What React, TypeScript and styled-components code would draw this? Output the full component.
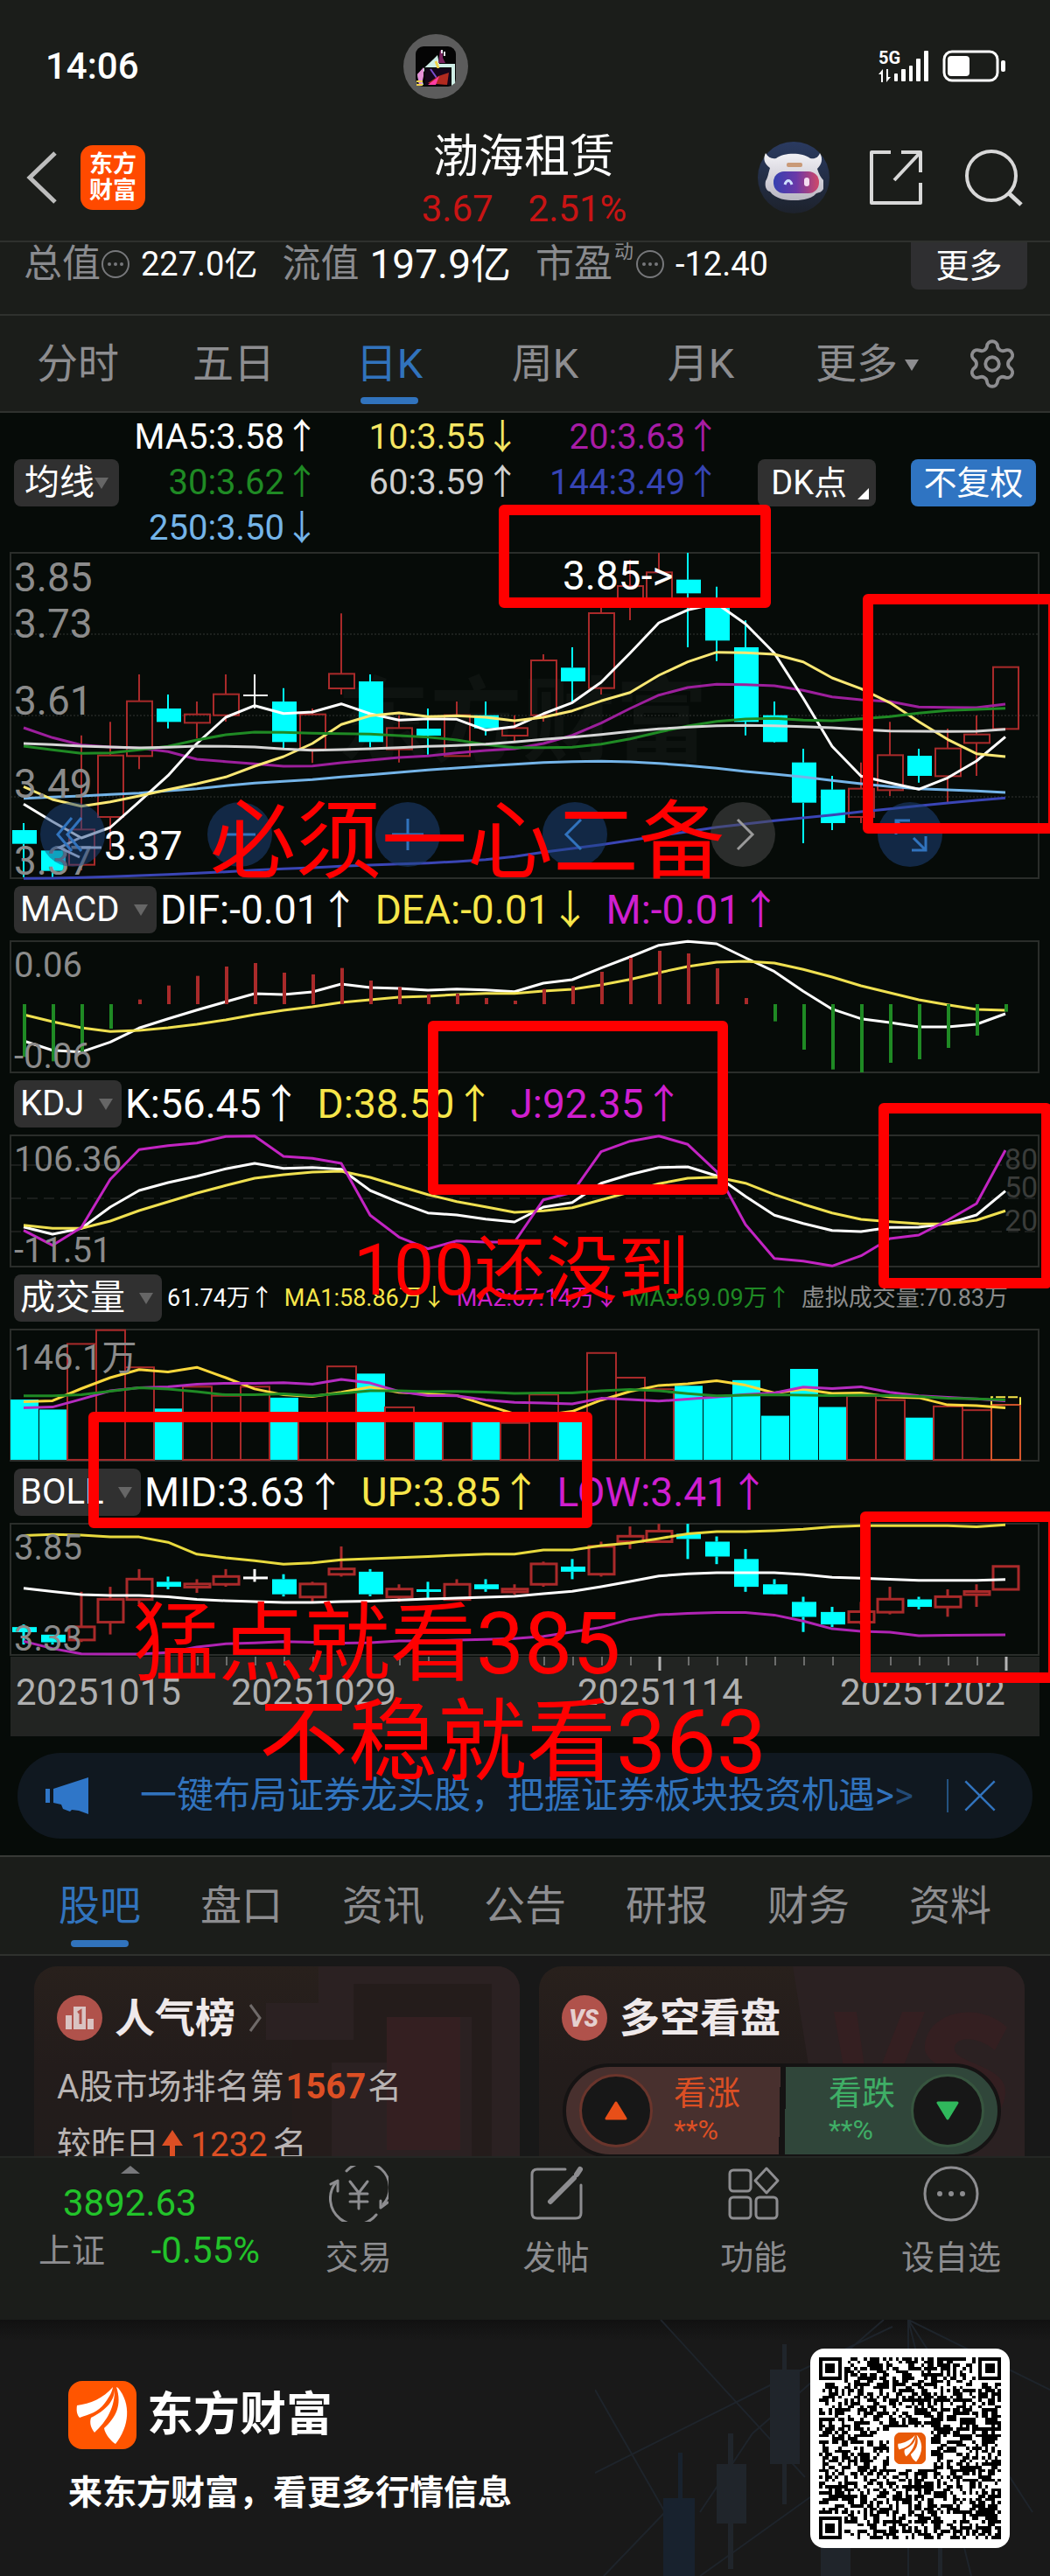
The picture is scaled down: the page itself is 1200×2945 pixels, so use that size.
import React from "react";
import styled, { createGlobalStyle } from "styled-components";
import { Settings } from "lucide-react";

const GlobalStyle = createGlobalStyle`
  *, *::before, *::after { box-sizing: border-box; }
  body { margin: 0; background: #1b1d1a; }
  button, select { font: inherit; color: inherit; border: 0; margin: 0; padding: 0; background: none; }
  svg { display: block; }
`;

const BLUE = "#3173bd";
const CYAN = "#00ffff";
const UP = "#a92a2a";
const WHITE = "#ffffff";
const YELLOW = "#f7e64a";
const MAGENTA = "#cf1fcf";
const GREEN = "#1f8a24";
const FRAME = "#2a2d2a";
const LABEL = "#8b8b8b";

const Page = styled.div`
  position: relative;
  overflow: hidden;
  background: #1b1d1a;
  color: #fff;
  font-family: Roboto, "Noto Sans CJK SC", sans-serif;
  font-size: 38px;
  line-height: 52px;
`;

/* ---------- status bar ---------- */
const StatusBar = styled.div`
  display: grid;
  grid-template-columns: 1fr auto 1fr;
  align-items: center;
  height: 130px;
  padding: 22px 50px 0 52px;
`;
const Clock = styled.time`
  font-size: 42px;
  font-weight: 500;
`;
const Island = styled.div`
  display: grid;
  place-items: center;
  width: 74px;
  height: 74px;
  margin-right: 206px;
  border-radius: 50%;
  background: #5c5c5c;
`;
const StatusIcons = styled.div`
  display: flex;
  justify-content: flex-end;
`;

/* ---------- header ---------- */
const Header = styled.header`
  display: grid;
  grid-template-columns: 1fr auto 1fr;
  align-items: center;
  height: 145px;
  padding: 0 30px 0 28px;
`;
const Side = styled.div<{ $end?: boolean }>`
  display: flex;
  align-items: center;
  gap: ${(p) => (p.$end ? 44 : 24)}px;
  justify-content: ${(p) => (p.$end ? "flex-end" : "flex-start")};
`;
const IconButton = styled.button`
  display: grid;
  place-items: center;
  cursor: pointer;
`;
const BrandTile = styled.span`
  display: grid;
  place-content: center;
  width: 74px;
  height: 74px;
  border-radius: 14px;
  background: #ff4a00;
  font-size: 27px;
  font-weight: 700;
  line-height: 30px;
`;
const Heading = styled.div`
  padding-top: 12px;
  text-align: center;
`;
const StockName = styled.h1`
  margin: 0;
  font-size: 52px;
  font-weight: 400;
  line-height: 60px;
`;
const Quote = styled.div`
  display: flex;
  justify-content: center;
  gap: 40px;
  color: #c81414;
  font-size: 42px;
  line-height: 58px;
`;

/* ---------- metrics ---------- */
const Metrics = styled.div`
  display: flex;
  align-items: center;
  height: 84px;
  padding: 0 26px 32px 27px;
  overflow: hidden;
  border-top: 2px solid #2f312e;
`;
const MetricName = styled.span`
  color: #8a8b8f;
  font-size: 44px;
`;
const MetricValue = styled.span<{ $big?: boolean }>`
  margin: 0 28px 0 12px;
  font-size: ${(p) => (p.$big ? 46 : 38)}px;
`;
const Sup = styled.sup`
  align-self: flex-start;
  margin: 0 2px;
  color: #8a8b8f;
  font-size: 22px;
  line-height: 22px;
`;
const MoreButton = styled.button`
  align-self: flex-start;
  flex: none;
  width: 133px;
  height: 54px;
  margin-left: auto;
  border-radius: 0 0 8px 8px;
  background: #2f2f31;
  line-height: 48px;
`;

/* ---------- tabs ---------- */
const PeriodTabs = styled.nav`
  display: grid;
  grid-template-columns: repeat(6, 1fr) 132px;
  height: 113px;
  border-top: 2px solid #2f312e;
  border-bottom: 2px solid #2f312e;
`;
const SectionTabs = styled.nav`
  display: grid;
  grid-template-columns: repeat(7, 1fr);
  height: 115px;
  padding: 0 33px;
  border-top: 2px solid #373936;
  border-bottom: 2px solid #2f312e;
`;
const Tab = styled.button<{ $on?: boolean }>`
  position: relative;
  color: ${(p) => (p.$on ? BLUE : "#8d8d90")};
  font-size: 47px;
  line-height: 109px;
  &::after {
    content: "";
    display: ${(p) => (p.$on ? "block" : "none")};
    position: absolute;
    left: calc(50% - 33px);
    bottom: 8px;
    width: 66px;
    height: 8px;
    border-radius: 4px;
    background: ${BLUE};
  }
`;
const Caret = styled.span<{ $color?: string }>`
  flex: none;
  border: 8px solid transparent;
  border-top: 13px solid ${(p) => p.$color || "#666"};
  border-bottom: 0;
`;
const TabCaret = styled(Caret)`
  position: absolute;
  top: 50px;
  right: 18px;
`;
const GearButton = styled(IconButton)`
  color: #8d8d90;
`;

/* ---------- indicator legends ---------- */
const ChartArea = styled.main`
  background: #060b08;
  padding-bottom: 19px;
`;
const MaLegend = styled.div`
  display: flex;
  align-items: center;
  height: 156px;
  padding: 4px 16px 0;
`;
const MaGrid = styled.div`
  display: grid;
  flex: 1;
  grid-template-columns: repeat(3, 1fr);
  margin-right: 43px;
  font-size: 40px;
  text-align: right;
`;
const Tone = styled.span<{ $color: string }>`
  color: ${(p) => p.$color};
  white-space: nowrap;
`;
const Picker = styled.label<{ $tight?: boolean }>`
  display: flex;
  flex: none;
  align-items: center;
  gap: ${(p) => (p.$tight ? 0 : 16)}px;
  height: 54px;
  padding: 0 ${(p) => (p.$tight ? 12 : 10)}px 0 ${(p) => (p.$tight ? 12 : 7)}px;
  border-radius: 8px;
  background: #303030;
  select {
    appearance: none;
    font-size: 40px;
    line-height: 54px;
    height: 54px;
  }
`;
const DkButton = styled.button`
  display: flex;
  align-items: flex-end;
  gap: 12px;
  height: 54px;
  padding: 0 8px 0 15px;
  border-radius: 8px;
  background: #303030;
  line-height: 54px;
  &::after {
    content: "";
    margin-bottom: 8px;
    border-left: 13px solid transparent;
    border-bottom: 13px solid #fff;
  }
`;
const AdjustButton = styled.button`
  width: 143px;
  height: 54px;
  margin-left: 40px;
  border-radius: 8px;
  background: #2f74c2;
  line-height: 54px;
`;
const IndicatorRow = styled.div<{ $small?: boolean }>`
  display: flex;
  align-items: center;
  gap: ${(p) => (p.$small ? 12 : 18)}px;
  height: 68px;
  padding-left: 16px;
  font-size: ${(p) => (p.$small ? 27 : 46)}px;
  & > label { margin-right: ${(p) => (p.$small ? -6 : -14)}px; }
`;

/* ---------- charts ---------- */
const Plot = styled.svg`
  width: 100%;
  height: auto;
  overflow: visible;
`;
const MainPlot = styled.div`
  position: relative;
`;
const Controls = styled.div`
  position: absolute;
  left: 46px;
  right: 123px;
  bottom: 15px;
  display: flex;
  justify-content: space-between;
`;
const RoundButton = styled.button<{ $muted?: boolean }>`
  display: grid;
  place-items: center;
  width: 74px;
  height: 74px;
  border-radius: 50%;
  background: ${(p) => (p.$muted ? "rgba(80, 80, 80, 0.5)" : "rgba(30, 70, 130, 0.5)")};
`;

/* ---------- banner ---------- */
const Banner = styled.aside`
  display: flex;
  align-items: center;
  height: 98px;
  margin: 19px 20px 0;
  padding: 0 40px 0 32px;
  border-radius: 49px;
  background: #101820;
  color: ${BLUE};
  font-size: 42px;
`;
const BannerLink = styled.a`
  flex: 1;
  margin-left: 58px;
  color: inherit;
  text-decoration: none;
  white-space: nowrap;
`;
const Faded = styled.span`
  opacity: 0.55;
`;
const Rule = styled.span`
  width: 2px;
  height: 38px;
  margin-right: 16px;
  background: #24517f;
`;

/* ---------- cards ---------- */
const Cards = styled.section`
  display: grid;
  grid-template-columns: 1fr 1fr;
  gap: 22px;
  height: 229px;
  padding: 12px 29px 0 39px;
  overflow: hidden;
  background: #181818;
`;
const Card = styled.article`
  position: relative;
  height: 280px;
  padding: 32px 26px;
  overflow: hidden;
  border-radius: 26px;
  background: linear-gradient(#28201c, #231c1b 40%, #201c1b);
`;
const CardArt = styled.svg`
  position: absolute;
  top: 0;
  right: 0;
`;
const CardTitle = styled.h2`
  position: relative;
  display: flex;
  align-items: center;
  gap: 14px;
  margin: 0;
  color: #efe9ea;
  font-size: 46px;
  font-weight: 700;
  line-height: 54px;
`;
const CardLine = styled.p<{ $first?: boolean }>`
  position: relative;
  display: flex;
  align-items: center;
  margin: ${(p) => (p.$first ? 26 : 14)}px 0 0;
  color: #b9b4b3;
  font-size: 39px;
`;
const Hot = styled.b<{ $plain?: boolean }>`
  margin: 0 ${(p) => (p.$plain ? 6 : 2)}px;
  color: #dc4f24;
  font-size: ${(p) => (p.$plain ? 39 : 40)}px;
  font-weight: ${(p) => (p.$plain ? 400 : 700)};
`;
const Vote = styled.div`
  position: relative;
  display: flex;
  height: 108px;
  margin: 25px 1px 0;
  overflow: hidden;
  border: 4px solid #151313;
  border-radius: 54px;
  background: linear-gradient(91deg, #48302e 49.5%, #151313 49.5% 50.8%, #30463a 50.8%);
`;
const VoteSide = styled.button<{ $down?: boolean }>`
  display: flex;
  flex: 1;
  flex-direction: ${(p) => (p.$down ? "row-reverse" : "row")};
  align-items: center;
  gap: ${(p) => (p.$down ? 18 : 24)}px;
  padding: 0 15px;
  color: ${(p) => (p.$down ? "#3fae66" : "#dc4f24")};
  text-align: left;
`;
const VoteKnob = styled.span<{ $down?: boolean }>`
  display: grid;
  place-items: center;
  width: 84px;
  height: 84px;
  border: 3px solid ${(p) => (p.$down ? "#37553f" : "#6a352c")};
  border-radius: 50%;
  background: #171717;
`;
const VoteText = styled.span`
  display: grid;
  line-height: 44px;
  small { font-size: 32px; line-height: 40px; }
`;

/* ---------- bottom bar ---------- */
const BottomBar = styled.nav`
  display: grid;
  grid-template-columns: 297px repeat(4, 1fr);
  height: 187px;
  border-top: 2px solid #242724;
  background: #1b1d1a;
  color: #8d8d90;
`;
const IndexBox = styled.button`
  position: relative;
  display: grid;
  align-content: start;
  padding: 24px 0 0 44px;
  text-align: left;
`;
const IndexValue = styled.span`
  padding-left: 28px;
  color: #22c32a;
  font-size: 42px;
  line-height: 56px;
`;
const IndexRow = styled.span`
  display: flex;
  justify-content: space-between;
  b { color: #22c32a; font-size: 42px; font-weight: 400; }
`;
const IndexCaret = styled.span`
  position: absolute;
  top: 9px;
  left: 138px;
  border: 11px solid transparent;
  border-top: 0;
  border-bottom: 9px solid #77787b;
`;
const Action = styled.button`
  display: grid;
  justify-items: center;
  align-content: start;
  gap: 15px;
  padding-top: 9px;
`;

/* ---------- footer ---------- */
const Footer = styled.footer`
  position: relative;
  display: flex;
  align-items: center;
  justify-content: space-between;
  height: 293px;
  padding: 0 46px 0 78px;
  overflow: hidden;
  background: linear-gradient(#111111, #191919 24px);
`;
const FooterArt = styled.svg`
  position: absolute;
  top: 0;
  right: 0;
`;
const Brand = styled.div`
  display: flex;
  align-items: center;
  gap: 12px;
  font-size: 53px;
  font-weight: 700;
  line-height: 78px;
`;
const Tagline = styled.p`
  margin: 24px 0 0;
  font-size: 39px;
  font-weight: 700;
`;
const QrCard = styled.div`
  position: relative;
  padding: 10px;
  border-radius: 16px;
  background: #fff;
`;

/* ---------- hand-drawn notes ---------- */
const NoteBox = styled.div<{ $x: number; $y: number; $w: number; $h: number }>`
  position: absolute;
  left: ${(p) => p.$x}px;
  top: ${(p) => p.$y}px;
  width: ${(p) => p.$w}px;
  height: ${(p) => p.$h}px;
  border: 12px solid #f00;
  border-radius: 6px;
  pointer-events: none;
`;
const NoteText = styled.div<{ $x: number; $y: number; $size: number }>`
  position: absolute;
  left: ${(p) => p.$x}px;
  top: ${(p) => p.$y}px;
  color: #f00;
  font-size: ${(p) => p.$size}px;
  line-height: 100px;
  white-space: nowrap;
  pointer-events: none;
`;

/* ---------- series ---------- */
type Candle = [kind: "u" | "d" | "w", high: number, top: number, bottom: number, low: number];

const candles: Candle[] = [
  ["d", 963, 987, 1034, 1148], ["d", 1057, 1057, 1127, 1148], ["u", 662, 985, 1106, 1125], ["u", 616, 731, 942, 1055],
  ["u", 453, 545, 733, 778], ["d", 522, 570, 616, 638], ["u", 546, 590, 619, 672], ["u", 453, 521, 593, 615],
  ["w", 453, 522, 522, 570], ["d", 500, 546, 685, 705], ["u", 570, 590, 710, 757], ["u", 244, 451, 501, 522],
  ["d", 453, 477, 685, 703], ["u", 593, 637, 710, 755], ["d", 570, 639, 663, 728], ["u", 546, 593, 733, 733],
  ["d", 546, 593, 638, 662], ["u", 593, 637, 663, 687], ["u", 384, 405, 593, 615], ["d", 360, 430, 477, 546],
  ["u", 200, 243, 500, 522], ["u", 60, 150, 200, 267], ["u", 36, 103, 200, 200], ["d", 36, 128, 175, 360],
  ["d", 152, 200, 337, 407], ["d", 268, 360, 616, 662], ["d", 546, 593, 685, 687], ["d", 708, 755, 893, 1032],
  ["d", 801, 848, 963, 987], ["u", 755, 845, 942, 963], ["u", 616, 730, 850, 870], ["d", 708, 732, 801, 824],
  ["u", 639, 707, 802, 892], ["u", 593, 659, 688, 801], ["u", 428, 428, 640, 640],
];

const ma5 = [898, 958, 1014, 978, 890, 800, 690, 600, 560, 587, 582, 554, 588, 610, 605, 607, 644, 632, 588, 550, 480, 380, 276, 232, 210, 280, 380, 535, 700, 802, 825, 847, 808, 750, 667];
const ma10 = [838, 882, 905, 890, 870, 848, 828, 805, 768, 735, 690, 625, 595, 585, 598, 595, 600, 612, 600, 578, 544, 515, 456, 410, 377, 379, 384, 410, 465, 502, 550, 615, 676, 725, 735];
const ma20 = [636, 670, 695, 702, 706, 718, 744, 752, 760, 768, 767, 756, 747, 738, 733, 722, 714, 708, 690, 662, 620, 570, 524, 498, 487, 488, 492, 508, 530, 540, 546, 565, 566, 567, 555];
const ma30 = [699, 712, 724, 722, 712, 700, 678, 660, 651, 652, 655, 656, 658, 663, 668, 678, 694, 704, 704, 703, 692, 674, 651, 630, 614, 606, 604, 610, 612, 605, 598, 586, 577, 573, 569];
const ma60 = [690, 694, 699, 702, 705, 703, 699, 700, 702, 709, 713, 711, 708, 704, 700, 697, 692, 685, 676, 668, 659, 649, 640, 634, 629, 628, 629, 632, 636, 642, 647, 648, 649, 648, 641];
const ma144 = [1153, 1152, 1150, 1147, 1143, 1139, 1135, 1130, 1124, 1120, 1116, 1111, 1107, 1103, 1100, 1095, 1088, 1078, 1063, 1050, 1037, 1022, 1007, 992, 977, 966, 955, 945, 935, 924, 914, 904, 894, 885, 877];
const ma250 = [878, 874, 870, 865, 860, 852, 845, 835, 826, 820, 814, 805, 797, 789, 781, 774, 767, 761, 755, 752, 751, 753, 758, 766, 775, 786, 795, 805, 817, 828, 838, 845, 849, 853, 858];

const macdBars = [625, 640, 610, 528, 428, 380, 347, 315, 303, 336, 342, 320, 363, 385, 410, 408, 423, 432, 392, 382, 333, 285, 261, 270, 321, 423, 503, 600, 668, 678, 645, 633, 594, 552, 470];
const dif = [570, 602, 608, 574, 526, 494, 464, 436, 408, 411, 402, 375, 387, 390, 396, 392, 395, 401, 372, 360, 320, 282, 242, 229, 237, 285, 332, 400, 461, 494, 507, 522, 522, 513, 477];
const dea = [480, 504, 525, 538, 534, 525, 513, 498, 480, 465, 453, 438, 429, 420, 417, 411, 407, 407, 399, 393, 378, 359, 336, 315, 300, 297, 303, 325, 351, 381, 405, 429, 446, 462, 465];

const kLine = [1208, 1233, 1213, 1140, 1083, 1056, 1034, 1009, 990, 1007, 1004, 1010, 1083, 1124, 1160, 1167, 1181, 1191, 1140, 1124, 1058, 1028, 1004, 1002, 1033, 1103, 1168, 1196, 1220, 1224, 1210, 1209, 1196, 1167, 1085];
const dLine = [1202, 1213, 1213, 1188, 1152, 1122, 1092, 1066, 1041, 1029, 1020, 1017, 1038, 1068, 1097, 1121, 1139, 1158, 1153, 1142, 1115, 1088, 1060, 1041, 1037, 1058, 1097, 1130, 1160, 1182, 1190, 1197, 1198, 1185, 1153];
const jLine = [1220, 1271, 1210, 1045, 943, 929, 920, 898, 896, 966, 973, 990, 1168, 1243, 1283, 1256, 1260, 1260, 1115, 1090, 950, 914, 896, 925, 1018, 1200, 1316, 1325, 1342, 1307, 1248, 1236, 1185, 1128, 945];

const volTops = [448, 480, 270, 226, 345, 477, 407, 436, 407, 442, 490, 342, 365, 473, 510, 505, 508, 523, 432, 510, 299, 378, 415, 404, 440, 386, 500, 350, 472, 437, 450, 506, 470, 482, 465];
const vol1 = [455, 452, 413, 378, 352, 360, 345, 378, 414, 433, 438, 425, 408, 425, 430, 435, 465, 494, 498, 486, 450, 422, 403, 398, 388, 402, 427, 415, 428, 427, 440, 442, 465, 468, 475];
const vol2 = [475, 472, 447, 420, 410, 407, 399, 396, 396, 394, 399, 384, 395, 422, 435, 436, 449, 457, 459, 462, 444, 448, 453, 447, 440, 432, 427, 408, 413, 407, 425, 436, 441, 446, 452];
const vol3 = [436, 436, 433, 421, 410, 414, 423, 433, 433, 430, 436, 428, 420, 420, 423, 422, 424, 428, 427, 427, 420, 416, 420, 429, 436, 434, 433, 434, 435, 434, 435, 438, 444, 446, 449];

const bollUp = [883, 880, 882, 888, 888, 905, 943, 955, 964, 975, 971, 961, 958, 954, 951, 946, 943, 943, 930, 930, 916, 907, 893, 878, 871, 871, 868, 863, 855, 852, 852, 852, 852, 855, 849];
const bollMid = [1052, 1063, 1072, 1075, 1075, 1079, 1088, 1092, 1095, 1098, 1098, 1095, 1093, 1090, 1086, 1084, 1081, 1078, 1070, 1062, 1047, 1030, 1013, 1006, 1002, 1002, 1002, 1008, 1017, 1020, 1023, 1027, 1027, 1027, 1024];
const bollLow = [1222, 1245, 1262, 1263, 1263, 1258, 1240, 1230, 1227, 1223, 1225, 1228, 1226, 1221, 1221, 1218, 1216, 1213, 1206, 1192, 1177, 1152, 1137, 1133, 1130, 1130, 1138, 1157, 1182, 1190, 1193, 1204, 1203, 1202, 1201];

type Scale = (v: number) => number;
const slot = (i: number) => 27 + 33 * i;
const priceY: Scale = (v) => 620 + v / 3;
const oscY: Scale = (v) => 1000 + v / 3;
const lowerY: Scale = (v) => 1440 + v / 2.8;
const bollCandleY: Scale = (v) => lowerY(846 + (v - 36) * 0.3474);

function Line({ data, y, color, width = 3 }: { data: number[]; y: Scale; color: string; width?: number }) {
  return (
    <polyline
      fill="none"
      stroke={color}
      strokeWidth={width}
      strokeLinejoin="round"
      points={data.map((v, i) => `${slot(i)},${y(v).toFixed(1)}`).join(" ")}
    />
  );
}

function Candles({ y, stroke }: { y: Scale; stroke: number }) {
  return (
    <g>
      {candles.map(([kind, high, top, bottom, low], i) => {
        const x = slot(i);
        const color = kind === "u" ? UP : kind === "d" ? CYAN : WHITE;
        const h = Math.max(y(bottom) - y(top), stroke);
        return (
          <g key={i} stroke={color} strokeWidth={stroke}>
            <line x1={x} x2={x} y1={y(high)} y2={y(top)} />
            <line x1={x} x2={x} y1={y(bottom)} y2={y(low)} />
            {kind === "u" ? (
              <rect x={x - 14} y={y(top)} width={29} height={h} fill="none" />
            ) : (
              <rect x={x - 13} y={y(top)} width={28} height={h} fill={color} stroke="none" />
            )}
          </g>
        );
      })}
    </g>
  );
}

function Frame({ top, bottom }: { top: number; bottom: number }) {
  return <rect x={12} y={top} width={1175} height={bottom - top} fill="none" stroke={FRAME} strokeWidth={2} />;
}

function PriceChart() {
  return (
    <Plot viewBox="0 628 1200 378" role="img" aria-label="日K">
      <Frame top={632} bottom={1004} />
      <text x={385} y={862} fontSize={106} fontWeight={700} fill="#0e1310">东方财富</text>
      {[725, 818, 911].map((y) => (
        <line key={y} x1={12} x2={1187} y1={y} y2={y} stroke="#333633" strokeWidth={1} strokeDasharray="2 2" />
      ))}
      <Candles y={priceY} stroke={2} />
      <Line data={ma144} y={priceY} color="#3a45b5" />
      <Line data={ma250} y={priceY} color="#74b4e8" />
      <Line data={ma20} y={priceY} color="#9c1f9c" />
      <Line data={ma5} y={priceY} color={WHITE} />
      <Line data={ma10} y={priceY} color="#fbe874" />
      <Line data={ma30} y={priceY} color={GREEN} />
      <Line data={ma60} y={priceY} color="#d6d6d6" />
      <g fontSize={46} fill={LABEL}>
        <text x={16} y={676}>3.85</text>
        <text x={16} y={729}>3.73</text>
        <text x={16} y={817}>3.61</text>
        <text x={16} y={912}>3.49</text>
        <text x={16} y={1000}>3.37</text>
      </g>
      <g fontSize={46} fill={WHITE}>
        <text x={119} y={983}>3.37</text>
        <text x={643} y={674}>3.85-&gt;</text>
      </g>
      <path d="M91 958L68 969L91 980M93 969H116" fill="none" stroke="#d5def0" strokeWidth={3} />
    </Plot>
  );
}

function MacdChart() {
  return (
    <Plot viewBox="0 1074 1200 154" role="img" aria-label="MACD">
      <Frame top={1076} bottom={1226} />
      <Line data={dif} y={oscY} color={WHITE} />
      <Line data={dea} y={oscY} color="#efe050" />
      {macdBars.map((v, i) => (
        <line key={i} x1={slot(i) + 1} x2={slot(i) + 1} y1={oscY(444)} y2={oscY(v)} stroke={v < 444 ? UP : GREEN} strokeWidth={4} />
      ))}
      <g fontSize={40} fill={LABEL}>
        <text x={16} y={1117}>0.06</text>
        <text x={16} y={1221}>-0.06</text>
      </g>
    </Plot>
  );
}

function KdjChart() {
  return (
    <Plot viewBox="0 1296 1200 154" role="img" aria-label="KDJ">
      <Frame top={1298} bottom={1448} />
      {[1332, 1370, 1408].map((y) => (
        <line key={y} x1={12} x2={1187} y1={y} y2={y} stroke="#303330" strokeWidth={1} strokeDasharray="12 7" />
      ))}
      <g fontSize={34} fill="#3a3c3a">
        <text x={1148} y={1337}>80</text>
        <text x={1148} y={1369}>50</text>
        <text x={1148} y={1407}>20</text>
      </g>
      <Line data={kLine} y={oscY} color={WHITE} />
      <Line data={dLine} y={oscY} color="#efe050" />
      <Line data={jLine} y={oscY} color="#c224c2" />
      <g fontSize={40} fill={LABEL}>
        <text x={16} y={1339}>106.36</text>
        <text x={16} y={1443}>-11.51</text>
      </g>
    </Plot>
  );
}

function VolumeChart() {
  const base = lowerY(641);
  const last = slot(34);
  return (
    <Plot viewBox="0 1518 1200 154" role="img" aria-label="成交量">
      <Frame top={1520} bottom={1670} />
      {volTops.map((v, i) => {
        const x = slot(i);
        const y = lowerY(v);
        return candles[i][0] === "d" ? (
          <rect key={i} x={x - 15} y={y} width={32} height={base - y} fill={CYAN} />
        ) : (
          <rect key={i} x={x - 16} y={y} width={33} height={base - y} fill="none" stroke={i === 34 ? "#d4552c" : UP} strokeWidth={2} />
        );
      })}
      <path d={`M${last - 16} ${lowerY(465)}V${lowerY(440)}H${last + 17}V${lowerY(465)}`} fill="none" stroke={YELLOW} strokeWidth={2} strokeDasharray="11 3" />
      <Line data={vol1} y={lowerY} color="#fbd83c" />
      <Line data={vol2} y={lowerY} color="#b52cc0" />
      <Line data={vol3} y={lowerY} color={GREEN} />
      <text x={16} y={1566} fontSize={40} fill={LABEL}>146.1万</text>
    </Plot>
  );
}

function BollChart() {
  return (
    <Plot viewBox="0 1740 1200 154" role="img" aria-label="BOLL">
      <Frame top={1742} bottom={1892} />
      <Candles y={bollCandleY} stroke={3} />
      <Line data={bollUp} y={lowerY} color="#e8da3e" />
      <Line data={bollMid} y={lowerY} color={WHITE} />
      <Line data={bollLow} y={lowerY} color="#b024b4" />
      <g fontSize={40} fill={LABEL}>
        <text x={16} y={1783}>3.85</text>
        <text x={16} y={1887}>3.33</text>
      </g>
    </Plot>
  );
}

function DateAxis() {
  const ticks = Array.from({ length: 29 }, (_, k) => k + 6);
  return (
    <Plot viewBox="0 0 1200 91" role="img" aria-label="日期">
      <rect x={12} width={1176} height={91} fill="#222422" />
      {ticks.map((i) => (
        <line key={i} x1={slot(i) + 1} x2={slot(i) + 1} y1={0} y2={i === 22 || i === 34 ? 16 : 10} stroke="#b5b5b5" strokeWidth={i === 22 || i === 34 ? 3 : 1} />
      ))}
      <g fontSize={42} fill="#b0b0b0">
        <text x={18} y={55}>20251015</text>
        <text x={264} y={55}>20251029</text>
        <text x={660} y={55}>20251114</text>
        <text x={960} y={55}>20251202</text>
      </g>
    </Plot>
  );
}

/* ---------- icons ---------- */
function InfoDots({ size = 34 }: { size?: number }) {
  return (
    <svg width={size} height={size} viewBox="0 0 34 34" fill="none" stroke="#77787b" strokeWidth="2">
      <circle cx="17" cy="17" r="15" />
      <g fill="#77787b" stroke="none"><circle cx="10" cy="17" r="2" /><circle cx="17" cy="17" r="2" /><circle cx="24" cy="17" r="2" /></g>
    </svg>
  );
}

function Feather({ size, tile }: { size: number; tile: string }) {
  return (
    <svg width={size} height={size} viewBox="0 0 78 78">
      <rect width="78" height="78" rx="16" fill={tile} />
      <g fill="#fff">
        <path d="M51 7C40 20 25 26 10 28C9 34 10 39 13 42C24 38 34 36 42 25C47 18 50 13 51 7Z" />
        <path d="M53 7C54 22 43 34 26 42C24 48 26 54 30 59C44 46 54 30 53 7Z" />
        <path d="M55 7C62 28 54 42 41 54C42 61 49 69 54 72C70 52 72 26 57 8Z" />
      </g>
    </svg>
  );
}

function AppIcon() {
  return (
    <svg width="46" height="46" viewBox="0 0 46 46">
      <rect width="46" height="46" rx="9" fill="#050505" />
      <path d="M2 32L20 15L25 10L27 20H45V42L41 45V24H10V28L6 34L9 44H4Z" fill="#cfeee6" />
      <path d="M2 32L9 24V34L7 44H4Z" fill="#e48fd6" />
      <path d="M28 4L31 7V13L34 19H26Z" fill="#7a2360" />
      <path d="M30 4V8M33 6V11" stroke="#e9e4f0" strokeWidth="2" />
      <path d="M23 17L26 25" stroke="#f1d24c" strokeWidth="3" />
      <rect x="11" y="25" width="29" height="19" fill="#14061a" />
      <path d="M17 26L24 36" stroke="#7a4fd0" strokeWidth="2" />
      <path d="M14 42L26 34L38 30L36 44Z" fill="#b22a1f" />
      <path d="M14 44L27 34L23 44Z" fill="#ff3ca4" />
      <path d="M1 40H8M1 44H8" stroke="#f1d24c" strokeWidth="2" />
    </svg>
  );
}

function SignalBattery() {
  return (
    <svg width="146" height="42" viewBox="0 0 146 42">
      <text x="0" y="18" fontSize="20" fontWeight="700" fill="#fff">5G</text>
      <g fill="#fff">
        <path d="M0 30L5 24V39H3V30ZM9 24V39L14 33H11V24Z" />
        <rect x="18" y="29" width="4" height="9" rx="1" /><rect x="26" y="24" width="5" height="14" rx="1" />
        <rect x="35" y="20" width="4" height="18" rx="1" /><rect x="43" y="12" width="5" height="26" rx="1" />
        <rect x="52" y="3" width="5" height="35" rx="1" />
        <rect x="79" y="9" width="25" height="23" rx="4" /><rect x="140" y="14" width="5" height="13" rx="2" />
      </g>
      <rect x="75" y="4" width="61" height="33" rx="9" fill="none" stroke="#fff" strokeWidth="3" />
    </svg>
  );
}

function Robot() {
  return (
    <svg width="82" height="82" viewBox="0 0 82 82">
      <defs>
        <linearGradient id="sky" x2="0" y2="1"><stop stopColor="#2a3a60" /><stop offset="1" stopColor="#1d222c" /></linearGradient>
        <linearGradient id="shell" x2="0" y2="1"><stop stopColor="#f2f1f5" /><stop offset="1" stopColor="#b9b6c2" /></linearGradient>
        <linearGradient id="visor"><stop stopColor="#3440b0" /><stop offset="0.5" stopColor="#6a38a8" /><stop offset="1" stopColor="#d04868" /></linearGradient>
      </defs>
      <circle cx="41" cy="41" r="41" fill="url(#sky)" />
      <path d="M14 30C7 25 6 19 9 13C12 18 16 20 21 19C30 12 51 12 60 19C66 20 69 18 71 13C75 20 73 26 68 31C70 37 72 41 75 44V54C73 58 70 58 67 59C60 67 46 67 41 67C34 67 20 66 14 57C9 56 8 50 9 45C12 40 12 36 14 30Z" fill="url(#shell)" />
      <rect x="18" y="34" width="52" height="25" rx="12" fill="url(#visor)" />
      <rect x="33" y="24" width="18" height="5" rx="2" fill="#c99a78" />
      <path d="M31 49C33 43 37 43 39 49" stroke="#cfe0ff" strokeWidth="3" fill="none" />
      <rect x="53" y="41" width="6" height="10" rx="3" fill="#f4dcf0" />
    </svg>
  );
}

const ring = { fill: "none", stroke: "#8d8d90", strokeWidth: 3, strokeLinecap: "round", strokeLinejoin: "round" } as const;

function TradeIcon() {
  return (
    <svg width="68" height="64" viewBox="0 0 68 64" {...ring}>
      <path d="M20 6A28 28 0 0 1 62 44M54 56A28 28 0 0 1 8 19" />
      <path d="M2 21L10 17V29M67 42L59 48V40" />
      <path d="M24 18L34 31L44 18M34 31V49M24 32H44M24 41H44" />
    </svg>
  );
}
function PostIcon() {
  return (
    <svg width="64" height="64" viewBox="0 0 64 64" {...ring}>
      <path d="M42 4H10Q4 4 4 10V54Q4 60 10 60H54Q60 60 60 54V22" />
      <path d="M59 4L55 10M52 14L25 41" strokeWidth="6" />
    </svg>
  );
}
function GridIcon() {
  return (
    <svg width="64" height="64" viewBox="0 0 64 64" {...ring}>
      <rect x="5" y="5" width="24" height="24" rx="4" />
      <rect x="5" y="36" width="24" height="24" rx="4" />
      <rect x="35" y="36" width="24" height="24" rx="4" />
      <path d="M47 3L60 17L47 31L34 17Z" />
    </svg>
  );
}
function MoreIcon() {
  return (
    <svg width="64" height="64" viewBox="0 0 64 64" {...ring}>
      <circle cx="32" cy="32" r="30" />
      <g fill="#8d8d90" stroke="none"><circle cx="19" cy="32" r="3" /><circle cx="32" cy="32" r="3" /><circle cx="45" cy="32" r="3" /></g>
    </svg>
  );
}

function Glyph({ d, color = BLUE, size = 48 }: { d: string; color?: string; size?: number }) {
  return (
    <svg width={size} height={size} viewBox="0 0 48 48" fill="none" stroke={color} strokeWidth="3">
      <path d={d} />
    </svg>
  );
}

/* 57×57 module code with three finder squares and a cleared centre */
function qrPath() {
  const n = 57;
  let seed = 20251202;
  let d = "";
  const finder = (x: number, y: number) => {
    const a = Math.max(Math.abs(x - 3), Math.abs(y - 3));
    return a === 3 || a <= 1;
  };
  for (let y = 0; y < n; y++) {
    for (let x = 0; x < n; x++) {
      seed = (seed * 1103515245 + 12345) % 2147483648;
      let on = (seed >> 16) % 100 < 52;
      if (x < 8 && y < 8) on = x < 7 && y < 7 && finder(x, y);
      else if (x > n - 9 && y < 8) on = x > n - 8 && y < 7 && finder(x - n + 7, y);
      else if (x < 8 && y > n - 9) on = x < 7 && y > n - 8 && finder(x, y - n + 7);
      if (Math.abs(x - 28) < 7 && Math.abs(y - 28) < 7) on = false;
      if (on) d += `M${x} ${y}h1v1h-1z`;
    }
  }
  return d;
}

function QrCode() {
  return (
    <QrCard>
      <svg width="208" height="208" viewBox="0 0 57 57" shapeRendering="crispEdges" role="img" aria-label="二维码">
        <path d={qrPath()} fill="#000" />
        <svg x="23.5" y="23.5" width="10" height="10" viewBox="0 0 78 78" shapeRendering="auto">
          <Feather size={78} tile="#e85a08" />
        </svg>
      </svg>
    </QrCard>
  );
}

function IndicatorPicker({ name, tight }: { name: string; tight?: boolean }) {
  return (
    <Picker $tight={tight}>
      <select aria-label={name} defaultValue={name}>
        <option>{name}</option>
      </select>
      <Caret />
    </Picker>
  );
}

const maItems: [string, string][] = [
  ["MA5:3.58↑", WHITE], ["10:3.55↓", "#f5e663"], ["20:3.63↑", "#a81ca6"],
  ["30:3.62↑", GREEN], ["60:3.59↑", "#d0d0d0"], ["144:3.49↑", "#3644b4"],
  ["250:3.50↓", "#74b4e8"],
];

export default function App() {
  return (
    <Page>
      <GlobalStyle />
      <StatusBar>
        <Clock>14:06</Clock>
        <Island><AppIcon /></Island>
        <StatusIcons><SignalBattery /></StatusIcons>
      </StatusBar>

      <Header>
        <Side>
          <IconButton aria-label="返回">
            <svg width="40" height="62" viewBox="0 0 40 62" fill="none" stroke="#bdbdbd" strokeWidth="5"><path d="M35 3L6 31L35 59" /></svg>
          </IconButton>
          <BrandTile><span>东方</span><span>财富</span></BrandTile>
        </Side>
        <Heading>
          <StockName>渤海租赁</StockName>
          <Quote><span>3.67</span><span>2.51%</span></Quote>
        </Heading>
        <Side $end>
          <IconButton aria-label="助手"><Robot /></IconButton>
          <IconButton aria-label="分享">
            <svg width="66" height="64" viewBox="0 0 66 64" fill="none" stroke="#d8d8d8" strokeWidth="4" strokeLinejoin="round"><path d="M26 3H4V61H60V38M38 3H60V26M60 3L30 35" /></svg>
          </IconButton>
          <IconButton aria-label="搜索">
            <svg width="68" height="66" viewBox="0 0 68 66" fill="none" stroke="#d8d8d8" strokeWidth="4"><circle cx="31" cy="31" r="28" /><path d="M51 51L65 64" strokeWidth="5" /></svg>
          </IconButton>
        </Side>
      </Header>

      <Metrics>
        <MetricName>总值</MetricName><InfoDots />
        <MetricValue>227.0亿</MetricValue>
        <MetricName>流值</MetricName>
        <MetricValue $big>197.9亿</MetricValue>
        <MetricName>市盈</MetricName><Sup>动</Sup><InfoDots />
        <MetricValue>-12.40</MetricValue>
        <MoreButton>更多</MoreButton>
      </Metrics>

      <PeriodTabs>
        <Tab>分时</Tab><Tab>五日</Tab><Tab $on>日K</Tab><Tab>周K</Tab><Tab>月K</Tab>
        <Tab>更多<TabCaret $color="#8d8d90" /></Tab>
        <GearButton aria-label="设置"><Settings size={62} strokeWidth={1.5} /></GearButton>
      </PeriodTabs>

      <ChartArea>
        <MaLegend>
          <IndicatorPicker name="均线" tight />
          <MaGrid>
            {maItems.map(([label, color]) => <Tone key={label} $color={color}>{label}</Tone>)}
          </MaGrid>
          <DkButton>DK点</DkButton>
          <AdjustButton>不复权</AdjustButton>
        </MaLegend>
        <MainPlot>
          <PriceChart />
          <Controls>
            <RoundButton aria-label="最早"><Glyph d="M23 5L7 24L23 43M34 5L18 24L34 43" /></RoundButton>
            <RoundButton aria-label="缩小"><Glyph d="M6 24H42" /></RoundButton>
            <RoundButton aria-label="放大"><Glyph d="M6 24H42M24 6V42" /></RoundButton>
            <RoundButton aria-label="向左"><Glyph d="M31 7L14 24L31 41" /></RoundButton>
            <RoundButton aria-label="向右" $muted><Glyph color="#9a9a9a" d="M18 7L35 24L18 41" /></RoundButton>
            <RoundButton aria-label="全屏"><Glyph d="M24 8H8V24M8 8L18 18M26 42H42V26M42 42L28 28" /></RoundButton>
          </Controls>
        </MainPlot>

        <IndicatorRow>
          <IndicatorPicker name="MACD" />
          <Tone $color={WHITE}>DIF:-0.01↑</Tone><Tone $color={YELLOW}>DEA:-0.01↓</Tone><Tone $color={MAGENTA}>M:-0.01↑</Tone>
        </IndicatorRow>
        <MacdChart />

        <IndicatorRow>
          <IndicatorPicker name="KDJ" />
          <Tone $color={WHITE}>K:56.45↑</Tone><Tone $color={YELLOW}>D:38.50↑</Tone><Tone $color={MAGENTA}>J:92.35↑</Tone>
        </IndicatorRow>
        <KdjChart />

        <IndicatorRow $small>
          <IndicatorPicker name="成交量" />
          <Tone $color={WHITE}>61.74万↑</Tone><Tone $color={YELLOW}>MA1:58.86万↓</Tone><Tone $color={MAGENTA}>MA2:67.14万↓</Tone>
          <Tone $color={GREEN}>MA3:69.09万↑</Tone><Tone $color="#8b8b8b">虚拟成交量:70.83万</Tone>
        </IndicatorRow>
        <VolumeChart />

        <IndicatorRow>
          <IndicatorPicker name="BOLL" />
          <Tone $color={WHITE}>MID:3.63↑</Tone><Tone $color={YELLOW}>UP:3.85↑</Tone><Tone $color={MAGENTA}>LOW:3.41↑</Tone>
        </IndicatorRow>
        <BollChart />
        <DateAxis />

        <Banner>
          <svg width="50" height="42" viewBox="0 0 50 42" fill="#2f76c8"><path d="M0 13H5V29H0ZM9 13L49 0V42L38 38L30 37L28 39L20 36L18 31L9 29Z" /></svg>
          <BannerLink href="#">一键布局证券龙头股，把握证券板块投资机遇&gt;<Faded>&gt;</Faded></BannerLink>
          <Rule />
          <IconButton aria-label="关闭"><Glyph size={40} d="M4 4L44 44M44 4L4 44" /></IconButton>
        </Banner>
      </ChartArea>

      <SectionTabs>
        <Tab $on>股吧</Tab><Tab>盘口</Tab><Tab>资讯</Tab><Tab>公告</Tab><Tab>研报</Tab><Tab>财务</Tab><Tab>资料</Tab>
      </SectionTabs>

      <Cards>
        <Card>
          <CardArt width="290" height="220" viewBox="0 0 290 220">
            <path d="M60 0H290V220H30V84L0 84V42H60Z" fill="#2b2122" />
            <path d="M100 20H258V220H235V58H138V110H75V220H30V84H100Z" fill="#241c1b" />
            <path d="M138 58H222V210H178V150L166 156V128L190 110V165H178V210H138Z" fill="#341f21" />
          </CardArt>
          <CardTitle>
            <svg width="52" height="52" viewBox="0 0 52 52"><circle cx="26" cy="26" r="26" fill="#b0524b" /><g fill="#d9c3c2"><rect x="10" y="23" width="7" height="16" /><rect x="19" y="13" width="14" height="26" /><rect x="35" y="27" width="7" height="12" /></g><path d="M24 20L27 18V33" stroke="#b0524b" strokeWidth="3" fill="none" /></svg>
            人气榜
            <svg width="18" height="34" viewBox="0 0 18 34" fill="none" stroke="#6f6a69" strokeWidth="3"><path d="M3 2L14 17L3 32" /></svg>
          </CardTitle>
          <CardLine $first>A股市场排名第<Hot>1567</Hot>名</CardLine>
          <CardLine>
            较昨日
            <svg width="30" height="44" viewBox="0 0 30 44" fill="#dc4f24"><path d="M15 5L27 23H18V38H12V23H3Z" /></svg>
            <Hot $plain>1232</Hot>名
          </CardLine>
        </Card>
        <Card>
          <CardArt width="290" height="220" viewBox="0 0 290 220">
            <path d="M25 0H290V220H60Z" fill="#2b2122" />
            <path d="M72 52L98 52L112 150L150 52H176L122 190H96Z" fill="#341f21" />
            <path d="M270 70C240 40 180 50 176 90C172 120 240 120 232 146C226 166 190 160 172 144L162 172C196 200 262 194 268 146C272 112 206 112 210 92C214 78 240 82 256 96Z" fill="#341f21" />
          </CardArt>
          <CardTitle>
            <svg width="52" height="52" viewBox="0 0 52 52"><circle cx="26" cy="26" r="26" fill="#b0524b" /><text x="25" y="36" textAnchor="middle" fontSize="27" fontWeight="900" fontStyle="italic" fill="#e5d0cf">VS</text></svg>
            多空看盘
          </CardTitle>
          <Vote>
            <VoteSide>
              <VoteKnob><svg width="26" height="22" viewBox="0 0 26 22"><path d="M13 2L24 20H2Z" fill="#e84f18" stroke="#e84f18" strokeWidth="3" strokeLinejoin="round" /></svg></VoteKnob>
              <VoteText>看涨<small>**%</small></VoteText>
            </VoteSide>
            <VoteSide $down>
              <VoteKnob $down><svg width="26" height="22" viewBox="0 0 26 22"><path d="M2 2H24L13 20Z" fill="#30b85c" stroke="#30b85c" strokeWidth="3" strokeLinejoin="round" /></svg></VoteKnob>
              <VoteText>看跌<small>**%</small></VoteText>
            </VoteSide>
          </Vote>
        </Card>
      </Cards>

      <BottomBar>
        <IndexBox>
          <IndexCaret />
          <IndexValue>3892.63</IndexValue>
          <IndexRow>上证<b>-0.55%</b></IndexRow>
        </IndexBox>
        <Action><TradeIcon />交易</Action>
        <Action><PostIcon />发帖</Action>
        <Action><GridIcon />功能</Action>
        <Action><MoreIcon />设自选</Action>
      </BottomBar>

      <Footer>
        <FooterArt width="520" height="293" viewBox="0 0 520 293">
          <g stroke="#1e242b" strokeWidth="2" fill="none">
            <path d="M75 0L240 180M0 175L210 70L340 8M0 80L80 220L10 293M120 293L250 200M358 0L520 80M358 0L500 220M358 0L430 293M358 0V293M330 0L180 130L120 220" />
          </g>
          <g fill="#20252b">
            <rect x="200" y="57" width="34" height="108" /><rect x="214" y="28" width="5" height="183" />
            <rect x="139" y="165" width="34" height="68" /><rect x="152" y="130" width="6" height="155" />
            <rect x="258" y="255" width="34" height="38" /><rect x="392" y="255" width="5" height="38" />
          </g>
          <g fill="#18222e"><rect x="78" y="204" width="36" height="89" /><rect x="95" y="152" width="5" height="60" /></g>
        </FooterArt>
        <div>
          <Brand><Feather size={78} tile="#ff5500" />东方财富</Brand>
          <Tagline>来东方财富，看更多行情信息</Tagline>
        </div>
        <QrCode />
      </Footer>

      <NoteBox $x={570} $y={577} $w={311} $h={118} />
      <NoteBox $x={986} $y={679} $w={224} $h={274} />
      <NoteBox $x={489} $y={1167} $w={343} $h={199} />
      <NoteBox $x={1004} $y={1261} $w={198} $h={212} />
      <NoteBox $x={101} $y={1614} $w={576} $h={133} />
      <NoteBox $x={983} $y={1728} $w={227} $h={196} />
      <NoteText $x={240} $y={913} $size={98}>必须一心二备</NoteText>
      <NoteText $x={404} $y={1402} $size={82}>100还没到</NoteText>
      <NoteText $x={152} $y={1830} $size={98}>猛点就看385</NoteText>
      <NoteText $x={296} $y={1942} $size={102}>不稳就看363</NoteText>
    </Page>
  );
}
